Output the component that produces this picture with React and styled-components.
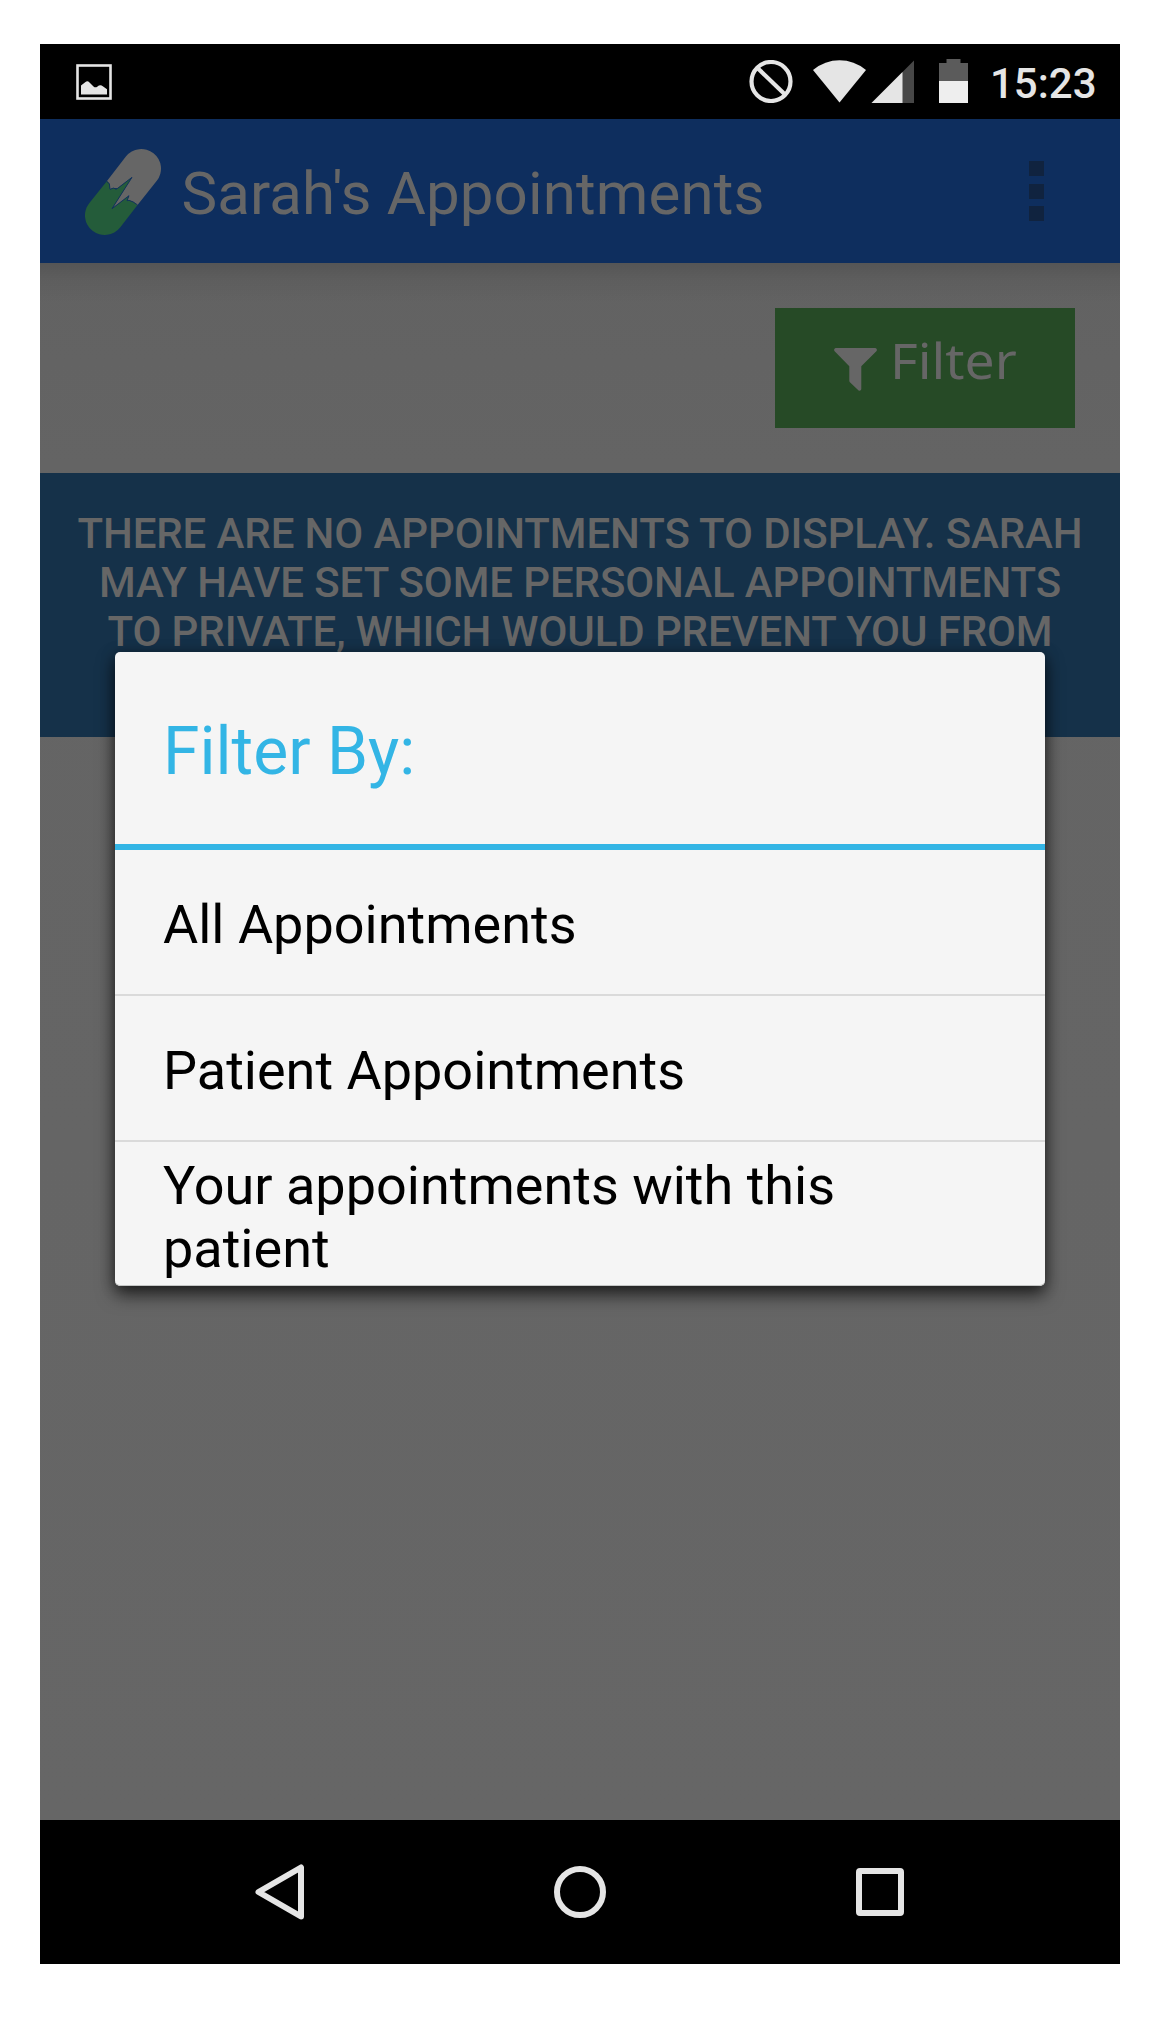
import React from "react";
import styled, { createGlobalStyle } from "styled-components";

const GlobalStyle = createGlobalStyle`
  body {
    margin: 0;
    background: #ffffff;
    font-family: Roboto, "Liberation Sans", sans-serif;
  }
`;

const Page = styled.div`
  box-sizing: border-box;
  width: 1168px;
  height: 2020px;
  padding: 44px 48px 56px 40px;
`;

const Phone = styled.div`
  position: relative;
  display: flex;
  flex-direction: column;
  width: 1080px;
  height: 1920px;
  overflow: hidden;
`;

const StatusBar = styled.header`
  box-sizing: border-box;
  display: flex;
  align-items: flex-start;
  justify-content: space-between;
  height: 75px;
  flex: none;
  padding: 15px 0 0 36px;
  background: #000;
`;

const StatusIcons = styled.div`
  display: flex;
  align-items: flex-start;
  width: 371px;
`;

const Glyph = styled.svg`
  display: block;
  flex: none;
  margin-left: ${(p) => p.$left || 0}px;
  margin-top: ${(p) => p.$top || 0}px;
`;

const Clock = styled.span`
  margin: 0 0 0 22px;
  font-size: 42px;
  font-weight: 500;
  line-height: 49px;
  color: #e5e5e5;
`;

const AppBar = styled.div`
  box-sizing: border-box;
  display: flex;
  align-items: center;
  height: 144px;
  flex: none;
  padding: 0 76px 0 44px;
  background: #0e2e5e;
`;

const AppTitle = styled.h1`
  flex: 1;
  margin: 5px 0 0 19.5px;
  font-size: 60px;
  font-weight: 400;
  line-height: 70px;
  letter-spacing: 0.14px;
  color: #666;
`;

const Overflow = styled.div`
  display: flex;
  flex-direction: column;
  justify-content: space-between;
  height: 60px;
`;

const OverflowDot = styled.span`
  width: 15px;
  height: 15px;
  background: #10233f;
`;

const Content = styled.main`
  flex: 1;
  background:
    linear-gradient(rgba(0, 0, 0, 0.13), rgba(0, 0, 0, 0.05) 16px, transparent 40px),
    linear-gradient(#626262, #646464 200px, #666666);
`;

const Toolbar = styled.div`
  box-sizing: border-box;
  display: flex;
  justify-content: flex-end;
  height: 210px;
  padding: 45px 45px 0 0;
`;

const FilterButton = styled.button`
  box-sizing: border-box;
  display: flex;
  align-items: flex-start;
  width: 300px;
  height: 120px;
  padding: 0 0 0 59px;
  border: 0;
  background: #264a26;
`;

const FilterLabel = styled.span`
  margin: 18px 0 0 13px;
  font-family: "Noto Sans", "Open Sans", sans-serif;
  font-size: 49px;
  line-height: 68px;
  color: #666;
  transform: scaleX(1.09);
  transform-origin: left center;
`;

const Banner = styled.div`
  box-sizing: border-box;
  height: 264px;
  padding-top: 36px;
  background: #153149;
  text-align: center;
  font-size: 42px;
  font-weight: 500;
  line-height: 49px;
  letter-spacing: -0.1px;
  text-transform: uppercase;
  color: #666;
`;

const BannerLine = styled.div`
  white-space: nowrap;
`;

const Dialog = styled.section`
  position: absolute;
  left: 75px;
  top: 608px;
  width: 930px;
  height: 634px;
  border-radius: 5px;
  overflow: hidden;
  background: #f5f5f5;
  box-shadow:
    0 9px 18px rgba(0, 0, 0, 0.6),
    0 2px 14px rgba(0, 0, 0, 0.35);

  &::after {
    content: "";
    position: absolute;
    inset: 0;
    border-radius: 5px;
    box-shadow: inset 0 -1px 0 #c4c6c5;
  }
`;

const DialogTitle = styled.h2`
  box-sizing: border-box;
  height: 198px;
  margin: 0;
  padding: 61px 48px 0;
  border-bottom: 6px solid #33b5e5;
  font-size: 66px;
  font-weight: 400;
  line-height: 77px;
  color: #33b5e5;
`;

const Option = styled.div`
  box-sizing: border-box;
  display: flex;
  align-items: center;
  height: ${(p) => (p.$last ? 144 : 146)}px;
  padding: ${(p) => (p.$last ? 6 : 4)}px 48px 0;
  font-size: 54px;
  line-height: 63px;
  color: #000;
  border-bottom: ${(p) => (p.$last ? "0" : "2px solid #dadada")};
`;

const NavBar = styled.nav`
  box-sizing: border-box;
  display: grid;
  grid-template-columns: repeat(3, 300px);
  align-items: center;
  justify-items: center;
  height: 144px;
  flex: none;
  padding: 0 90px;
  background: #000;
`;

const LIGHT = "#e5e5e5";

const PictureIcon = () => (
  <Glyph $top={5} width="36" height="36" viewBox="0 0 36 36">
    <rect x="1.5" y="1.5" width="33" height="33" fill="none" stroke={LIGHT} strokeWidth="2.6" />
    <path d="M5 30.5V21.5L9.5 18Q11.5 16.4 13.5 18.5L17.5 22.4Q19.3 24 21.2 22.7Q24.3 20.2 26.8 22.2L31 25.3V30.5Z" fill={LIGHT} />
  </Glyph>
);

const BlockedIcon = () => (
  <Glyph $top={1} width="44" height="43" viewBox="0 0 44 43">
    <circle cx="22" cy="21.5" r="19.5" fill="none" stroke={LIGHT} strokeWidth="4.2" />
    <path d="M9 8.5L35.5 34" stroke={LIGHT} strokeWidth="4.2" />
  </Glyph>
);

const WifiIcon = () => (
  <Glyph $left={20} $top={1} width="53" height="43" viewBox="0 0 53 43">
    <path d="M0 10Q12 0.3 26.5 0.3T53 10L26.5 42.5Z" fill={LIGHT} />
  </Glyph>
);

const SignalIcon = () => (
  <Glyph $left={5} $top={1} width="43" height="43" viewBox="0 0 43 43">
    <path d="M0.5 43L43 0.5V43Z" fill="#474747" />
    <path d="M0.5 43L31.5 12V43Z" fill={LIGHT} />
  </Glyph>
);

const BatteryIcon = () => (
  <Glyph $left={25} width="29" height="44" viewBox="0 0 29 44">
    <path d="M0 22V4H7.5V0H21.5V4H29V22Z" fill="#5b5b5b" />
    <path d="M0 22H29V44H0Z" fill="#eeeeee" />
  </Glyph>
);

const PillLogo = () => (
  <Glyph $top={2} width="78" height="88" viewBox="162 354 234 264">
    <path
      d="M231 453L287.6 379.5A59 59 0 0 1 380.4 452.5L322 526L310 516L297 511L291 512L297 497L246 536L306 442L263 475L251 474L240 478L238 461Z"
      fill="#666"
    />
    <path
      d="M231 453L177.6 519.5A59 59 0 0 0 270.4 592.5L322 526L310 516L297 511L291 512L297 497L246 536L306 442L263 475L258 478L251 474L240 478L238 461Z"
      fill="#245c3a"
    />
    <path
      d="M230 455L238 461L240 478L251 474L258 478L263 475L306 442L246 536L297 497L291 512L297 511L310 516L323 525"
      fill="none"
      stroke="#0e2e5e"
      strokeWidth="2.6"
    />
  </Glyph>
);

const FunnelIcon = () => (
  <Glyph $top={40} width="43" height="43" viewBox="0 0 43 43">
    <path
      d="M1.6 0H41.4Q43.6 1 42.6 3L27.3 18.2V41.3Q26.8 43.3 24.6 42.6L15.9 34.2Q15.3 33.6 15.3 32.6V18.2L0.4 3Q-0.6 1 1.6 0Z"
      fill="#666"
    />
  </Glyph>
);

const BackIcon = () => (
  <Glyph width="50" height="56" viewBox="0 0 50 56">
    <path d="M46 3.5V52.5L3.5 28Z" fill="none" stroke={LIGHT} strokeWidth="6" strokeLinejoin="round" />
  </Glyph>
);

const HomeIcon = () => (
  <Glyph width="52" height="52" viewBox="0 0 52 52">
    <circle cx="26" cy="26" r="23" fill="none" stroke={LIGHT} strokeWidth="6" />
  </Glyph>
);

const RecentsIcon = () => (
  <Glyph width="48" height="48" viewBox="0 0 48 48">
    <path
      fillRule="evenodd"
      d="M4 0H44Q48 0 48 4V44Q48 48 44 48H4Q0 48 0 44V4Q0 0 4 0ZM6 6V42H42V6Z"
      fill={LIGHT}
    />
  </Glyph>
);

const bannerLines = [
  "There are no appointments to display. Sarah",
  "may have set some personal appointments",
  "to private, which would prevent you from",
];

const options = ["All Appointments", "Patient Appointments", "Your appointments with this patient"];

export default function App() {
  return (
    <Page>
      <GlobalStyle />
      <Phone>
        <StatusBar>
          <PictureIcon />
          <StatusIcons>
            <BlockedIcon />
            <WifiIcon />
            <SignalIcon />
            <BatteryIcon />
            <Clock>15:23</Clock>
          </StatusIcons>
        </StatusBar>
        <AppBar>
          <PillLogo />
          <AppTitle>Sarah's Appointments</AppTitle>
          <Overflow>
            <OverflowDot />
            <OverflowDot />
            <OverflowDot />
          </Overflow>
        </AppBar>
        <Content>
          <Toolbar>
            <FilterButton>
              <FunnelIcon />
              <FilterLabel>Filter</FilterLabel>
            </FilterButton>
          </Toolbar>
          <Banner>
            {bannerLines.map((line) => (
              <BannerLine key={line}>{line}</BannerLine>
            ))}
          </Banner>
        </Content>
        <NavBar>
          <BackIcon />
          <HomeIcon />
          <RecentsIcon />
        </NavBar>
        <Dialog>
          <DialogTitle>Filter By:</DialogTitle>
          {options.map((label, i) => (
            <Option key={label} $last={i === options.length - 1}>
              {label}
            </Option>
          ))}
        </Dialog>
      </Phone>
    </Page>
  );
}
